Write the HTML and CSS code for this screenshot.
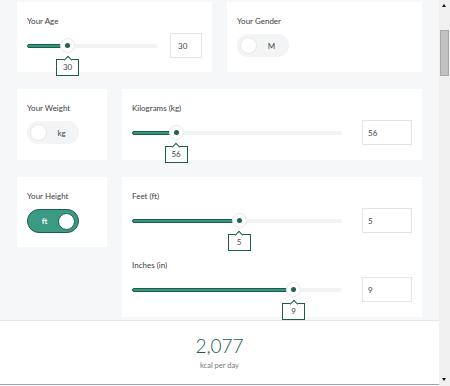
FILE: index.html
```html
<!DOCTYPE html>
<html lang="en">
<head>
    <meta charset="UTF-8">
    <meta name="viewport" content="width=device-width, initial-scale=1.0">
    <title>Calorie Calculator</title>
    <link rel="stylesheet" href="styles.css">
</head>
<body>
    <div class="frame">
        <main class="viewport">
            <div class="content">
                <div class="row row-half">
                    <section class="card">
                        <p class="label">Your Age</p>
                        <div class="slider-row slider-row-tight">
                            <div class="slider">
                                <div class="fill" style="width: 31%"></div>
                                <div class="thumb" style="left: 31%"><span class="tip">30</span></div>
                            </div>
                            <input class="num num-small" type="text" value="30">
                        </div>
                    </section>
                    <section class="card">
                        <p class="label">Your Gender</p>
                        <div class="toggle">
                            <span class="knob"></span>
                            <span class="toggle-text">M</span>
                        </div>
                    </section>
                </div>

                <div class="row row-split">
                    <section class="card">
                        <p class="label">Your Weight</p>
                        <div class="toggle">
                            <span class="knob"></span>
                            <span class="toggle-text">kg</span>
                        </div>
                    </section>
                    <section class="card card-wide">
                        <p class="label">Kilograms (kg)</p>
                        <div class="slider-row">
                            <div class="slider">
                                <div class="fill" style="width: 21%"></div>
                                <div class="thumb" style="left: 21%"><span class="tip">56</span></div>
                            </div>
                            <input class="num" type="text" value="56">
                        </div>
                    </section>
                </div>

                <div class="row row-split">
                    <section class="card card-short">
                        <p class="label">Your Height</p>
                        <div class="toggle toggle-on">
                            <span class="toggle-text">ft</span>
                            <span class="knob"></span>
                        </div>
                    </section>
                    <section class="card card-wide">
                        <p class="label">Feet (ft)</p>
                        <div class="slider-row">
                            <div class="slider">
                                <div class="fill" style="width: 51%"></div>
                                <div class="thumb" style="left: 51%"><span class="tip">5</span></div>
                            </div>
                            <input class="num" type="text" value="5">
                        </div>
                        <p class="label label-next">Inches (in)</p>
                        <div class="slider-row">
                            <div class="slider">
                                <div class="fill" style="width: 77%"></div>
                                <div class="thumb" style="left: 77%"><span class="tip">9</span></div>
                            </div>
                            <input class="num" type="text" value="9">
                        </div>
                    </section>
                </div>
            </div>

            <footer class="result">
                <div class="result-value">2,077</div>
                <div class="result-unit">kcal per day</div>
            </footer>
        </main>

        <div class="scrollbar">
            <span class="arrow arrow-up"></span>
            <div class="scroll-thumb"></div>
            <span class="arrow arrow-down"></span>
        </div>
    </div>
</body>
</html>
```

FILE: styles.css
```css
body {
    margin: 0;
    font-family: Lato, "Open Sans", sans-serif;
    color: #444;
    background-color: #f6f7f9;
}
.frame {
    display: flex;
    width: 450px;
    height: 386px;
    overflow: hidden;
}
.viewport {
    flex: 1;
    display: flex;
    flex-direction: column;
    min-width: 0;
}
.content {
    flex: 1;
    padding: 2px 17px 0;
    display: flex;
    flex-direction: column;
    gap: 17px;
    overflow: hidden;
}
.row {
    display: grid;
    gap: 15px;
}
.row-half {
    grid-template-columns: 1fr 1fr;
}
.row-split {
    grid-template-columns: 90px 1fr;
}
.card {
    background-color: #fff;
    padding: 13px 10px 14px;
}
.card-wide {
    padding-bottom: 15px;
}
.card-short {
    align-self: start;
}
.label {
    margin: 0 0 6px;
    font-size: 8px;
    line-height: 12px;
    color: #3d3d3d;
}
.label-next {
    margin-top: 26px;
}

/* slider */
.slider-row {
    display: flex;
    align-items: center;
    gap: 20px;
}
.slider-row-tight {
    gap: 12px;
}
.slider {
    position: relative;
    flex: 1;
    height: 4px;
    border-radius: 2px;
    background-color: #f1f2f4;
}
.fill {
    position: absolute;
    left: 0;
    top: 0;
    height: 4px;
    box-sizing: border-box;
    border: 1px solid #1d5c4d;
    border-radius: 2px 0 0 2px;
    background-color: #36977f;
}
.thumb {
    position: absolute;
    top: 50%;
    width: 15px;
    height: 15px;
    box-sizing: border-box;
    margin: -7.5px 0 0 -7.5px;
    border: 1px solid #e6e7e9;
    border-radius: 50%;
    background-color: #fff;
}
.thumb::after {
    content: "";
    position: absolute;
    left: 50%;
    top: 50%;
    width: 5px;
    height: 5px;
    margin: -2.5px 0 0 -2.5px;
    border-radius: 50%;
    background-color: #1d6454;
}
.tip {
    position: absolute;
    top: 20px;
    left: 50%;
    width: 23px;
    height: 17px;
    margin-left: -11.5px;
    box-sizing: border-box;
    border: 1px solid #1d5c4d;
    background-color: #fff;
    font-size: 8px;
    line-height: 15px;
    text-align: center;
    color: #444;
}
.tip::before {
    content: "";
    position: absolute;
    top: -3px;
    left: 50%;
    width: 5px;
    height: 5px;
    margin-left: -3px;
    border-top: 1px solid #1d5c4d;
    border-left: 1px solid #1d5c4d;
    background-color: #fff;
    transform: rotate(45deg);
}
.num {
    width: 50px;
    height: 25px;
    box-sizing: border-box;
    padding: 0 5px;
    border: 1px solid #e3e4e6;
    font-family: inherit;
    font-size: 8px;
    color: #444;
    background-color: #fff;
    outline: none;
}
.num-small {
    width: 32px;
    padding: 0 7px;
}

/* toggle */
.toggle {
    display: flex;
    align-items: center;
    width: 52px;
    height: 23px;
    box-sizing: border-box;
    margin-top: 7px;
    padding: 0 3px;
    border-radius: 12px;
    background-color: #f3f4f6;
}
.knob {
    width: 17px;
    height: 17px;
    box-sizing: border-box;
    border: 1px solid #e6e7e9;
    border-radius: 50%;
    background-color: #fff;
}
.toggle-text {
    flex: 1;
    text-align: center;
    font-size: 8px;
    color: #444;
}
.toggle-on {
    height: 24px;
    border: 1px solid #1d5c4d;
    background-color: #3a9a83;
}
.toggle-on .knob {
    border-color: #1d5c4d;
}
.toggle-on .toggle-text {
    color: #fff;
    font-weight: bold;
}

/* result */
.result {
    height: 63px;
    border-top: 1px solid #e3e5e8;
    border-bottom: 1px solid #a2a6b0;
    margin-bottom: 1px;
    background-color: #fff;
    text-align: center;
}
.result-value {
    margin-top: 14px;
    font-size: 19px;
    font-weight: 300;
    line-height: 22px;
    color: #1d5e50;
}
.result-unit {
    margin-top: 4px;
    font-size: 7.5px;
    color: #777;
}

/* scrollbar */
.scrollbar {
    position: relative;
    width: 11px;
    background-color: #f0f0f0;
}
.scroll-thumb {
    margin: 30px 1px 0;
    height: 46px;
    box-sizing: border-box;
    border: 1px solid #a8a8a8;
    background-color: #c1c1c1;
}
.arrow {
    position: absolute;
    left: 3px;
    width: 0;
    height: 0;
    border-left: 2.5px solid transparent;
    border-right: 2.5px solid transparent;
}
.arrow-up {
    top: 4px;
    border-bottom: 3px solid #111;
}
.arrow-down {
    bottom: 5px;
    border-top: 3px solid #111;
}
```
